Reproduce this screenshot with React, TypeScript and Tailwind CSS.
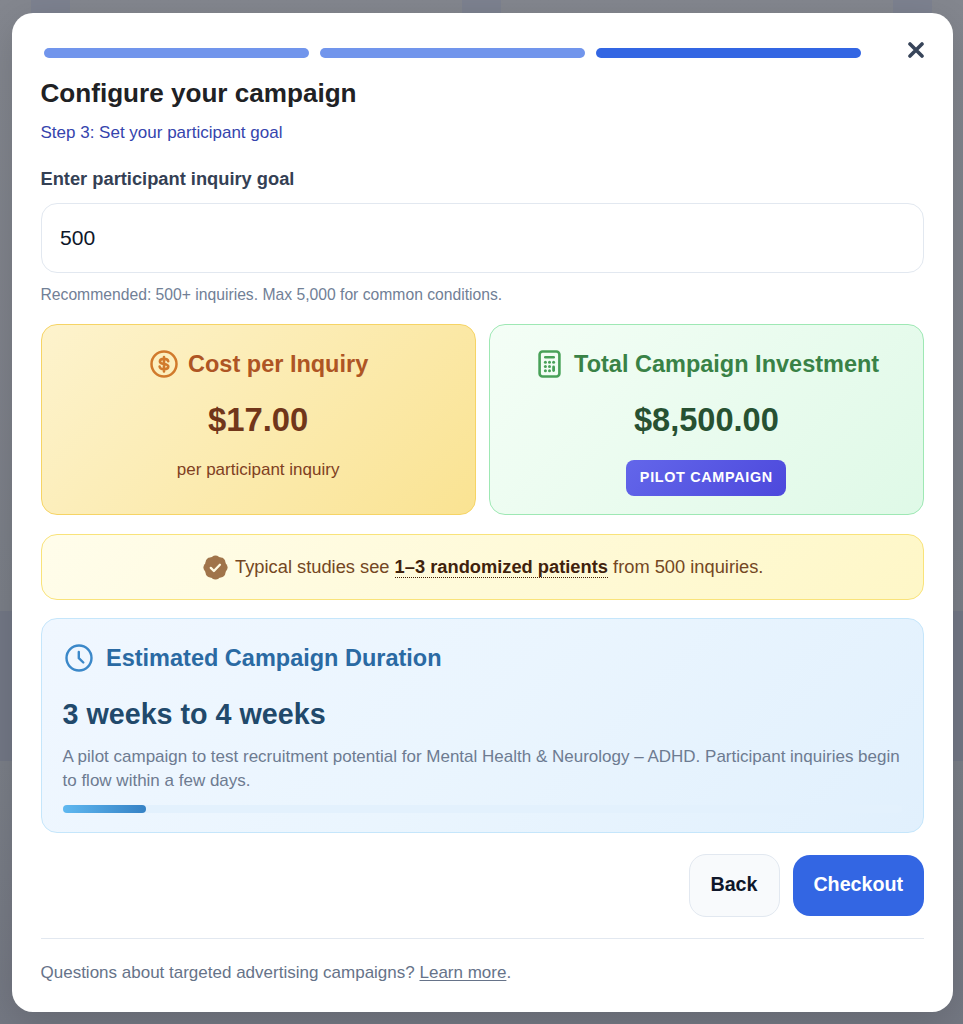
import { useState } from "react";

const STEPS = ["bg-[#7195ec]", "bg-[#7195ec]", "bg-[#3366e3]"];

const BADGE_BUMPS = [0, 45, 90, 135, 180, 225, 270, 315];

const KEYPAD_DOTS = [
  [7.4, 12.2],
  [11.5, 12.2],
  [15.6, 12.2],
  [7.4, 16.5],
  [11.5, 16.5],
  [7.4, 20.8],
  [11.5, 20.8],
];

function CloseIcon() {
  return (
    <svg
      className="h-4 w-4"
      viewBox="0 0 16 16"
      fill="none"
      stroke="currentColor"
      strokeWidth="3.6"
      strokeLinecap="round"
    >
      <path d="M2 2l12 12M14 2 2 14" />
    </svg>
  );
}

function DollarIcon() {
  return (
    <svg
      className="h-7 w-7 shrink-0 text-[#d17a2c]"
      viewBox="0 0 28 28"
      fill="none"
      stroke="currentColor"
      strokeLinecap="round"
      strokeLinejoin="round"
    >
      <circle cx="14" cy="14" r="12.5" strokeWidth="2.5" />
      <path
        strokeWidth="2.6"
        d="M18.2 11.2c-.4-1.6-2-2.300-4.200-2.300-2.400 0-4.100.9-4.100 2.500 0 1.700 1.700 2.200 4.100 2.600s4.300.9 4.300 2.600c0 1.700-1.900 2.600-4.300 2.600-2.300 0-4.100-.8-4.400-2.600M14 7v14.400"
      />
    </svg>
  );
}

function CalculatorIcon() {
  return (
    <svg
      className="h-7 w-[23px] shrink-0 text-[#48a158]"
      viewBox="0 0 23 28"
      fill="none"
      stroke="currentColor"
      strokeLinecap="round"
    >
      <rect x="1.6" y="1.5" width="19.8" height="25" rx="3" strokeWidth="2.6" />
      <path strokeWidth="2.6" d="M7.3 7.2h8.4" />
      <path strokeWidth="2.8" d="M15.6 17v3.6" />
      {KEYPAD_DOTS.map(([x, y]) => (
        <circle key={`${x}-${y}`} cx={x} cy={y} r="1.5" fill="currentColor" stroke="none" />
      ))}
    </svg>
  );
}

function ClockIcon() {
  return (
    <svg
      className="h-7 w-7 shrink-0 text-[#3b88c9]"
      viewBox="0 0 28 28"
      fill="none"
      stroke="currentColor"
      strokeWidth="2.4"
      strokeLinecap="round"
      strokeLinejoin="round"
    >
      <circle cx="14" cy="14" r="12.5" />
      <path d="M13.8 8v6.2l4.5 4.3" />
    </svg>
  );
}

function VerifiedIcon() {
  return (
    <svg className="mt-0.5 h-[25px] w-[25px] shrink-0 text-[#a0744a]" viewBox="0 0 25 25" fill="currentColor">
      <circle cx="12.5" cy="12.5" r="11" />
      {BADGE_BUMPS.map((angle) => (
        <circle key={angle} cx="12.5" cy="5" r="4.6" transform={`rotate(${angle} 12.5 12.5)`} />
      ))}
      <path
        d="m7.8 12.9 3.1 3.1 6-6.2"
        fill="none"
        stroke="#fffbe3"
        strokeWidth="2.3"
        strokeLinecap="round"
        strokeLinejoin="round"
      />
    </svg>
  );
}

// Dimmed page that stays visible around the dialog
function Backdrop() {
  return (
    <div className="absolute inset-0 -z-10 flex flex-col bg-[#717684]" aria-hidden="true">
      <div className="flex h-[611px] items-start justify-between bg-linear-to-b from-[#84878f] to-[#7b7f88] px-[31px]">
        <div className="h-10 w-[39px] bg-[#7d8290]" />
        <div className="h-10 w-[39px] bg-[#7d8290]" />
        <div className="h-10 w-[39px] bg-[#7d8290]" />
      </div>
      <div className="h-[150px] bg-[#737886]" />
      <div className="flex-1 bg-linear-to-b from-[#7b7f88] to-[#747883]" />
    </div>
  );
}

export default function App() {
  const [goal, setGoal] = useState("500");

  return (
    <div className="relative isolate h-[1024px] w-[963px] overflow-hidden pt-[13px] pl-3 font-['Liberation_Sans',Arial,sans-serif]">
      <Backdrop />
      <div
        role="dialog"
        aria-labelledby="dialog-title"
        className="flex h-[999px] w-[940.5px] flex-col rounded-[21px] bg-white px-[28.5px] shadow-[0_10px_40px_rgba(0,0,0,0.15)]"
      >
        <div className="flex h-[62px] shrink-0 items-start justify-between pl-[3.5px]">
          <div className="flex w-[817px] gap-[11.5px] pt-[35px]">
            {STEPS.map((color, index) => (
              <div key={index} className={`h-[9.5px] flex-1 rounded-full ${color}`} />
            ))}
          </div>
          <button type="button" className="mt-[29px] text-[#38455a]" aria-label="Close">
            <CloseIcon />
          </button>
        </div>

        <h2 id="dialog-title" className="mt-[2px] text-[26.1px] leading-8 font-bold text-[#202124]">
          Configure your campaign
        </h2>
        <p className="mt-3 text-[17px] leading-6 text-[#3544ad]">Step 3: Set your participant goal</p>

        <label htmlFor="goal" className="mt-[22px] text-[18.3px] leading-6 font-bold text-[#344054]">
          Enter participant inquiry goal
        </label>
        <input
          id="goal"
          value={goal}
          onChange={(event) => setGoal(event.target.value)}
          className="mt-[11.5px] h-[70px] w-full shrink-0 rounded-2xl border-[1.5px] border-[#e2e8f0] px-[18.5px] text-[21.1px] text-[#0f172a] outline-none"
        />
        <p className="mt-[10.5px] text-[15.7px] leading-6 text-[#718096]">
          Recommended: 500+ inquiries. Max 5,000 for common conditions.
        </p>

        <div className="mt-[16.5px] grid shrink-0 grid-cols-2 gap-[13px]">
          <section className="flex h-[191.5px] flex-col items-center rounded-2xl border-[1.5px] border-[#f6d465] bg-linear-135 from-[#fdf3cd] to-[#fae392] pt-[25px]">
            <div className="flex items-center gap-[10px] pl-[2px] text-[23.5px] leading-7 font-bold text-[#ae5524]">
              <DollarIcon />
              Cost per Inquiry
            </div>
            <p className="mt-[22px] text-[32.8px] leading-10 font-bold text-[#71361a]">$17.00</p>
            <p className="mt-[18px] text-[17px] leading-6 text-[#80401f]">per participant inquiry</p>
          </section>
          <section className="flex h-[191.5px] flex-col items-center rounded-2xl border-[1.5px] border-[#9ee8b4] bg-linear-135 from-[#f4fef6] to-[#dff9e7] pt-[25px]">
            <div className="flex items-center gap-[13px] pl-[4.5px] text-[23.5px] leading-7 font-bold text-[#398246]">
              <CalculatorIcon />
              Total Campaign Investment
            </div>
            <p className="mt-[22px] text-[32.6px] leading-10 font-bold text-[#275132]">$8,500.00</p>
            <span className="mt-5 flex h-9 w-[160px] items-center justify-center rounded-lg bg-linear-135 from-[#6366ea] to-[#4d48dc] text-[14.4px] font-bold tracking-[0.67px] text-white">
              PILOT CAMPAIGN
            </span>
          </section>
        </div>

        <div className="mt-[18.5px] flex h-[66px] shrink-0 items-center justify-center gap-[7px] rounded-2xl border-[1.5px] border-[#f9e37a] bg-linear-135 from-[#fffdeb] to-[#fef7c7] pl-[2px] text-[18.3px] text-[#744723]">
          <VerifiedIcon />
          <p>
            Typical studies see{" "}
            <strong className="border-b-[1.5px] border-dotted border-[#422006] font-bold text-[#3f220c]">
              1–3 randomized patients
            </strong>{" "}
            from 500 inquiries.
          </p>
        </div>

        <section className="mt-[18px] h-[215px] shrink-0 rounded-2xl border-[1.5px] border-[#c5e6fb] bg-linear-135 from-[#f0f7ff] via-[#eaf5fe] to-[#e1f0fd] px-[21px] pt-[25px]">
          <div className="flex items-center gap-[13px] pl-[2.5px] text-[23.5px] leading-7 font-bold text-[#2a6aa3]">
            <ClockIcon />
            Estimated Campaign Duration
          </div>
          <p className="mt-6 text-[28.7px] leading-9 font-bold text-[#21496b]">3 weeks to 4 weeks</p>
          <p className="mt-[13px] text-[17px] leading-6 text-[#6d7b91]">
            A pilot campaign to test recruitment potential for Mental Health &amp; Neurology – ADHD. Participant
            inquiries begin to flow within a few days.
          </p>
          <div className="mt-3 h-2 rounded-full bg-[#e3f1fd]">
            <div className="h-full w-[10%] rounded-full bg-linear-to-r from-[#5fb8f0] to-[#3682c5]" />
          </div>
        </section>

        <div className="mt-[21px] flex shrink-0 items-center justify-end gap-[13px]">
          <button
            type="button"
            className="h-[63px] w-[91px] rounded-[17px] border-[1.5px] border-[#e2e8f0] bg-[#f8fafc] pb-px text-[19.7px] font-bold text-[#0f172a]"
          >
            Back
          </button>
          <button
            type="button"
            className="h-[61px] w-[131.5px] rounded-[17px] bg-[#3366e3] pb-px text-[19.7px] font-bold text-white"
          >
            Checkout
          </button>
        </div>

        <footer className="mt-[21.5px] border-t-[1.5px] border-[#e2e8f0] pt-[22px] text-[17px] leading-6 text-[#667389]">
          Questions about targeted advertising campaigns?{" "}
          <a href="#" className="underline underline-offset-2">
            Learn more
          </a>
          .
        </footer>
      </div>
    </div>
  );
}
